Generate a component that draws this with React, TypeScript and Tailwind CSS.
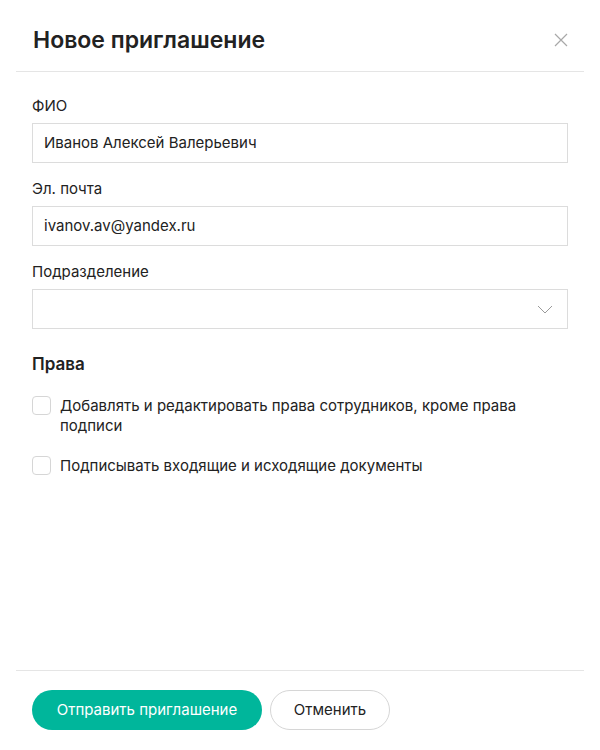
import React from 'react'

const font = { fontFamily: 'Inter, "Liberation Sans", sans-serif' }

const Field = ({ label, value, select }: { label: string; value?: string; select?: boolean }) => (
  <div className="flex flex-col">
    <label className="text-[15px] leading-5 text-[#222]">{label}</label>
    <div className="mt-[7px] h-10 border border-[#dcdcdc] flex items-center justify-between pl-[11px] pr-[14px] text-[15px] text-[#222]">
      <span>{value}</span>
      {select && (
        <svg width="16" height="9" viewBox="0 0 16 9" fill="none">
          <path d="M1 1l7 7 7-7" stroke="#9a9a9a" strokeWidth="1" />
        </svg>
      )}
    </div>
  </div>
)

const Check = ({ label }: { label: string }) => (
  <label className="flex items-start gap-[9px] text-[15px] leading-5 text-[#222]">
    <span className="w-[19px] h-[19px] shrink-0 rounded-[4px] border border-[#d6d6d6] bg-white" />
    <span>{label}</span>
  </label>
)

export default function App() {
  return (
    <div className="w-[600px] h-[750px] bg-white flex flex-col" style={font}>
      <div className="flex items-center justify-between pt-[26px] pb-[17px] mx-[16px] px-[17px] border-b border-[#e5e5e5]">
        <h1 className="text-[23px] leading-[28px] font-semibold text-[#222]">Новое приглашение</h1>
        <svg width="14" height="14" viewBox="0 0 14 14" className="mr-[-1px]">
          <path d="M1 1l12 12M13 1L1 13" stroke="#a8a8a8" strokeWidth="1.2" />
        </svg>
      </div>

      <div className="flex-1 px-[32px] pt-[24px] flex flex-col gap-[16px]">
        <Field label="ФИО" value="Иванов Алексей Валерьевич" />
        <Field label="Эл. почта" value="ivanov.av@yandex.ru" />
        <Field label="Подразделение" select />

        <h2 className="mt-[7px] text-[17px] leading-6 font-semibold text-[#222]">Права</h2>
        <div className="mt-[4px] flex flex-col gap-[20px]">
          <Check label="Добавлять и редактировать права сотрудников, кроме права подписи" />
          <Check label="Подписывать входящие и исходящие документы" />
        </div>
      </div>

      <div className="mx-[16px] border-t border-[#e5e5e5] pt-[19px] pb-[20px] px-[16px] flex gap-[8px]">
        <button className="h-10 w-[230px] rounded-full bg-[#00b69b] text-white text-[15px]">Отправить приглашение</button>
        <button className="h-10 w-[120px] rounded-full border border-[#d6d6d6] bg-white text-[#222] text-[15px]">Отменить</button>
      </div>
    </div>
  )
}
